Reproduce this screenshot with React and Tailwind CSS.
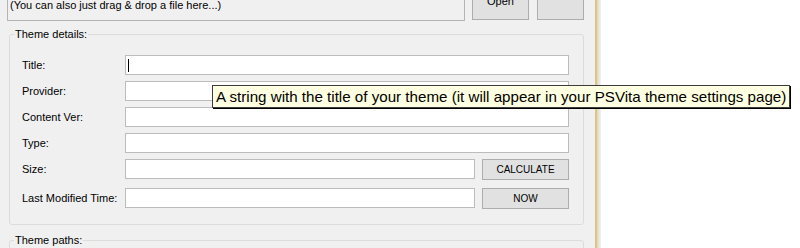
export default function App() {
  const rows = [
    { label: "Title:", caret: true },
    { label: "Provider:" },
    { label: "Content Ver:" },
    { label: "Type:" },
  ];

  return (
    <div className="relative w-[800px] h-[248px] overflow-hidden bg-white flex font-['Liberation_Sans',Arial,sans-serif] text-black">
      <div className="w-[595px] h-full bg-[#f0f0f0] flex flex-col">
        {/* drop zone + buttons */}
        <div className="flex items-end h-[30px] -mt-[9px] pl-[7px] shrink-0">
          <div className="w-[458px] h-full border border-[#b4b4b4] flex items-end pl-[2px] pb-[9px] text-[11px] leading-[12px]">
            (You can also just drag &amp; drop a file here...)
          </div>
          <button className="ml-[7px] mb-[1px] w-[57px] h-[24px] bg-[#e1e1e1] border border-[#adadad] text-[11px] leading-none flex items-end justify-center pb-[12px]">
            Open
          </button>
          <button className="ml-[8px] mb-[1px] w-[47px] h-[24px] bg-[#e1e1e1] border border-[#adadad]" />
        </div>

        {/* theme details */}
        <fieldset className="ml-[9px] mt-[7px] w-[575px] h-[197px] border border-[#dcdcdc] rounded-[3px] pl-[12px] pt-[14px] shrink-0">
          <legend className="-ml-[8px] px-[1px] text-[11px] leading-[13px]">Theme details:</legend>
          <div className="flex flex-col gap-[6px]">
            {rows.map((r) => (
              <div key={r.label} className="flex items-center h-[20px]">
                <span className="w-[103px] text-[11px]">{r.label}</span>
                <div className="w-[444px] h-[20px] bg-white border border-[#bcbcbc] flex items-center pl-[2px]">
                  {r.caret && <div className="w-[1px] h-[13px] bg-black" />}
                </div>
              </div>
            ))}
            <div className="flex items-start h-[21px]">
              <span className="w-[103px] text-[11px] leading-[20px]">Size:</span>
              <div className="w-[350px] h-[20px] bg-white border border-[#bcbcbc]" />
              <button className="ml-[7px] w-[87px] h-[21px] bg-[#e1e1e1] border border-[#adadad] text-[10px] leading-none">
                CALCULATE
              </button>
            </div>
            <div className="flex items-start h-[21px] mt-[2px]">
              <span className="w-[103px] text-[11px] leading-[20px]">Last Modified Time:</span>
              <div className="w-[350px] h-[20px] bg-white border border-[#bcbcbc]" />
              <button className="ml-[7px] w-[87px] h-[21px] bg-[#e1e1e1] border border-[#adadad] text-[10px] leading-none">
                NOW
              </button>
            </div>
          </div>
        </fieldset>

        {/* theme paths */}
        <fieldset className="ml-[9px] mt-[9px] w-[575px] h-[40px] border border-[#dcdcdc] rounded-[3px] pl-[12px] shrink-0">
          <legend className="-ml-[8px] px-[1px] text-[11px] leading-[13px]">Theme paths:</legend>
        </fieldset>
      </div>

      {/* window edge */}
      <div className="w-[2px] h-full bg-[#e6c46c]" />
      <div className="w-[4px] h-full bg-gradient-to-r from-[#d4d6da] to-[#f4f4f4]" />
      <div className="flex-1 h-full bg-white" />

      {/* tooltip */}
      <div className="absolute left-[212px] top-[85px] h-[23px] pl-[3px] pr-[3px] bg-[#ffffe1] border border-[#3c3c3c] shadow-[1px_1px_0_#000] text-[15.15px] leading-[21px] whitespace-nowrap">
        A string with the title of your theme (it will appear in your PSVita theme settings page)
      </div>
    </div>
  );
}
